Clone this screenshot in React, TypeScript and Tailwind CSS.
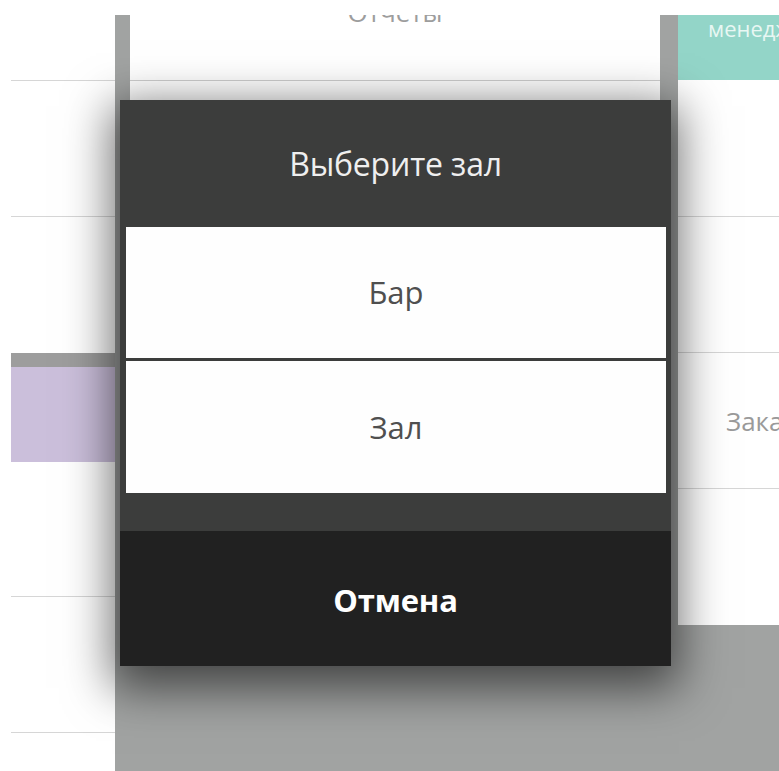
import React from "react";

const font = { fontFamily: '"Open Sans", "Noto Sans", "DejaVu Sans", sans-serif' };

function LeftColumn() {
  return (
    <div className="w-[115px] shrink-0 pl-[11px] bg-white flex flex-col">
      <div className="h-[66px] border-b border-[#d6d6d6]" />
      <div className="h-[136px] border-b border-[#d6d6d6]" />
      <div className="h-[136px]" />
      <div className="h-[14px] bg-[#9d9d9d]" />
      <div className="h-[95px] bg-[#cbbfdb]" />
      <div className="h-[135px] border-b border-[#d6d6d6]" />
      <div className="h-[136px] border-b border-[#d6d6d6]" />
    </div>
  );
}

function MiddleColumn() {
  return (
    <div className="w-[563px] shrink-0 bg-[#a1a3a2] pl-[15px] pr-[18px]">
      <div className="bg-white h-[610px] flex flex-col">
        <div className="h-[66px] border-b border-[#cfcfcf] overflow-hidden flex justify-center">
          <span className="text-[26px] leading-none text-[#9d9d9d] -mt-[16px] h-[40px]">Отчеты</span>
        </div>
        <div className="h-[136px] border-b border-[#d6d6d6]" />
        <div className="h-[136px] border-b border-[#d6d6d6]" />
      </div>
    </div>
  );
}

function RightColumn() {
  return (
    <div className="flex-1 flex flex-col">
      <div className="bg-white h-[610px] flex flex-col">
        <div className="h-[65px] bg-[#93d5c8] overflow-hidden pl-[30px] pt-[2px]">
          <span className="block text-[22px] leading-none text-[#e8f7f3] whitespace-nowrap">менеджер</span>
        </div>
        <div className="h-[137px] border-b border-[#d6d6d6]" />
        <div className="h-[136px] border-b border-[#d6d6d6]" />
        <div className="h-[136px] border-b border-[#d6d6d6] flex items-center pl-[48px] overflow-hidden">
          <span className="text-[26px] leading-none text-[#9a9a9a] whitespace-nowrap">Заказы</span>
        </div>
      </div>
      <div className="flex-1 bg-[#a1a3a2]" />
    </div>
  );
}

function HallDialog() {
  const halls = ["Бар", "Зал"];
  return (
    <div className="absolute left-[120px] top-[100px] w-[551px] h-[566px] bg-[#3c3d3c] flex flex-col shadow-[0_14px_44px_8px_rgba(0,0,0,0.58)]">
      <div className="h-[127px] flex items-center justify-center">
        <span className="text-[32px] leading-none tracking-[-0.2px] text-[#efefef]">Выберите зал</span>
      </div>
      <div className="pl-[6px] pr-[5px] flex flex-col gap-[3px]">
        {halls.map((h, i) => (
          <button
            key={h}
            className={`${i === 0 ? "h-[131px]" : "h-[132px]"} bg-[#fefefe] flex items-center justify-center text-[31px] leading-none text-[#4f4f4f]`}
          >
            {h}
          </button>
        ))}
      </div>
      <div className="h-[38px]" />
      <button className="flex-1 bg-[#212121] flex items-center justify-center pt-[4px] text-[31px] leading-none font-bold tracking-[-0.2px] text-white">
        Отмена
      </button>
    </div>
  );
}

export default function App() {
  return (
    <div className="relative w-[779px] h-[771px] overflow-hidden bg-white" style={font}>
      <div className="h-[15px] bg-white" />
      <div className="flex h-[756px]">
        <LeftColumn />
        <MiddleColumn />
        <RightColumn />
      </div>
      <HallDialog />
    </div>
  );
}
